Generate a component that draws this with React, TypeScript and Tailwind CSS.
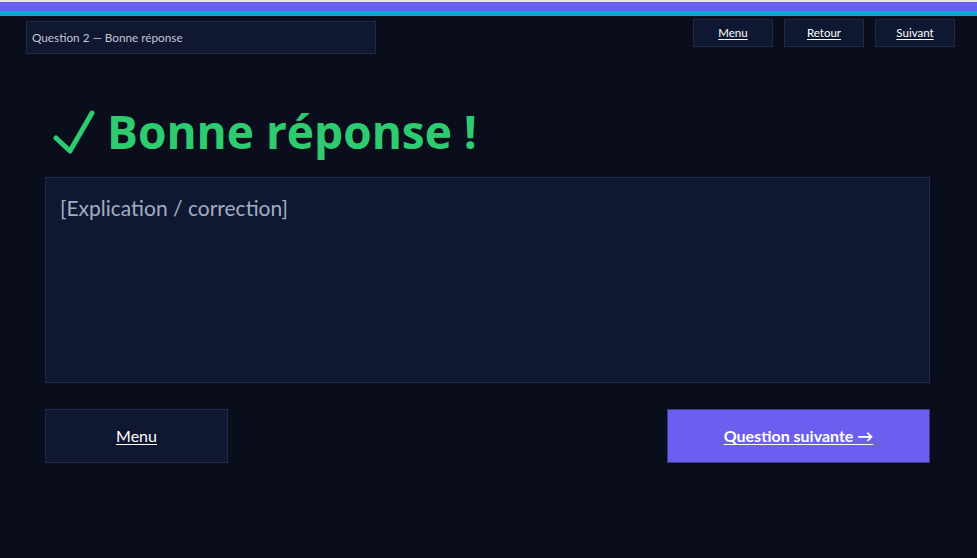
import React from 'react';

const TopButton: React.FC<{ label: string }> = ({ label }) => (
  <button className="w-[80px] h-[28px] bg-[#0f1833] border border-[#1f2a4a] text-white text-[11.5px] underline underline-offset-2">
    {label}
  </button>
);

const App: React.FC = () => {
  return (
    <div
      className="w-full h-[558px] bg-[#0a0e1c] flex flex-col overflow-hidden"
      style={{ fontFamily: 'Lato, "Open Sans", sans-serif' }}
    >
      {/* stripes */}
      <div className="h-[2px] bg-[#e5e7eb]" />
      <div className="h-[9px] bg-[#6c5ff0]" />
      <div className="h-[5px] bg-[#06a9d2]" />

      {/* header */}
      <div className="flex items-start justify-between pl-[26px] pr-[22px]">
        <div className="mt-[5px] w-[350px] h-[33px] bg-[#0f1731] border border-[#1f2a4a] flex items-center px-[5px] text-[11.75px] text-[#c3c8d4]">
          Question 2 — Bonne réponse
        </div>
        <div className="mt-[3px] flex gap-[11px]">
          <TopButton label="Menu" />
          <TopButton label="Retour" />
          <TopButton label="Suivant" />
        </div>
      </div>

      {/* body */}
      <div className="px-[45px] pr-[47px] flex flex-col">
        <h1 className="mt-[42px] ml-[8px] h-[70px] flex items-center text-[46px] font-bold text-[#2ecc71] leading-none">
          <svg width="42" height="44" viewBox="0 0 42 44" className="shrink-0 mt-[1px]">
            <polyline
              points="3,28 17,41 39,3"
              fill="none"
              stroke="#2ecc71"
              strokeWidth="5"
              strokeLinecap="round"
              strokeLinejoin="round"
            />
          </svg>
          <span className="ml-[12px]" style={{ fontFamily: '"Open Sans", Lato, sans-serif' }}>
            Bonne réponse !
          </span>
        </h1>
        <div className="mt-[11px] h-[206px] bg-[#0f1833] border border-[#1f2a4d] px-[14px] py-[17px] text-[21px] text-[#a3adc2] leading-tight">
          [Explication / correction]
        </div>
        <div className="mt-[26px] flex justify-between">
          <button className="w-[183px] h-[54px] bg-[#0f1733] border border-[#1f2a4d] text-white text-[16px] underline underline-offset-2">
            Menu
          </button>
          <button className="w-[263px] h-[54px] bg-[#6c5ff0] border border-[#3b3a8c] text-white text-[16px] font-bold underline underline-offset-2">
            Question suivante →
          </button>
        </div>
      </div>
    </div>
  );
};

export default App;
